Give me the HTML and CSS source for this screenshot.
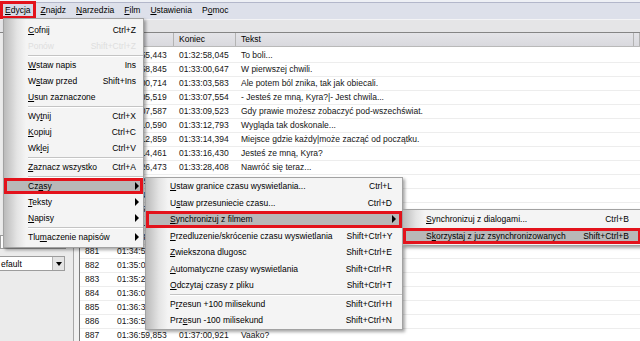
FILE: index.html
```
<!DOCTYPE html>
<html lang="pl">
<head>
    <meta charset="UTF-8">
    <title>Edycja - Czasy - Synchronizuj z filmem</title>
    <link rel="stylesheet" href="styles.css">
</head>
<body>
<div class="window">
    <!-- Menu bar -->
    <div class="menubar">
        <span class="menubar-item open"><u>E</u>dycja</span>
        <span class="menubar-item"><u>Z</u>najdz</span>
        <span class="menubar-item"><u>N</u>arzedzia</span>
        <span class="menubar-item"><u>F</u>ilm</span>
        <span class="menubar-item"><u>U</u>stawienia</span>
        <span class="menubar-item">P<u>o</u>moc</span>
    </div>
    <div class="toolbar"></div>

    <div class="main">
        <!-- Left panel -->
        <div class="side">
            <div class="side-fill"></div>
            <div class="edit"><span class="edit-btn"></span></div>
            <div class="combo"><span class="combo-text">efault</span><span class="combo-btn"></span></div>
        </div>
        <div class="splitter"></div>

        <!-- Subtitle list -->
        <div class="list">
            <div class="row head"><span>Nr</span><span>Start</span><span>Koniec</span><span>Tekst</span><span></span></div>
            <div class="list-body">
                <div class="row"><span>867</span><span>01:32:55,443</span><span>01:32:58,045</span><span>To boli...</span></div>
                <div class="row"><span>868</span><span>01:32:58,845</span><span>01:33:00,647</span><span>W pierwszej chwili.</span></div>
                <div class="row"><span>869</span><span>01:33:00,714</span><span>01:33:03,583</span><span>Ale potem ból znika, tak jak obiecali.</span></div>
                <div class="row"><span>870</span><span>01:33:05,519</span><span>01:33:07,554</span><span>- Jesteś ze mną, Kyra?|- Jest chwila...</span></div>
                <div class="row"><span>871</span><span>01:33:07,587</span><span>01:33:09,523</span><span>Gdy prawie możesz zobaczyć pod-wszechświat.</span></div>
                <div class="row"><span>872</span><span>01:33:10,590</span><span>01:33:12,793</span><span>Wygląda tak doskonale...</span></div>
                <div class="row"><span>873</span><span>01:33:12,859</span><span>01:33:14,394</span><span>Miejsce gdzie każdy|może zacząć od początku.</span></div>
                <div class="row"><span>874</span><span>01:33:14,461</span><span>01:33:16,430</span><span>Jesteś ze mną, Kyra?</span></div>
                <div class="row"><span>875</span><span>01:33:26,473</span><span>01:33:28,408</span><span>Nawróć się teraz...</span></div>
                <div class="row"><span>876</span><span>01:33:29,910</span><span>01:33:31,202</span><span>Nie mogę.</span></div>
                <div class="row"><span>877</span><span>01:33:41,318</span><span>01:33:43,150</span><span>Dlaczego?</span></div>
                <div class="row"><span>878</span><span>01:33:52,004</span><span>01:33:54,871</span><span>Bo on tam jest.</span></div>
                <div class="row"><span>879</span><span>01:34:10,226</span><span>01:34:12,620</span><span>Kto?</span></div>
                <div class="row"><span>880</span><span>01:34:31,497</span><span>01:34:33,308</span><span>Riddick.</span></div>
                <div class="row"><span>881</span><span>01:34:52,113</span><span>01:34:54,402</span><span>Czekaj.</span></div>
                <div class="row"><span>882</span><span>01:35:01,927</span><span>01:35:04,011</span><span>Nie teraz.</span></div>
                <div class="row"><span>883</span><span>01:35:24,610</span><span>01:35:26,795</span><span>Słyszysz?</span></div>
                <div class="row"><span>884</span><span>01:36:08,342</span><span>01:36:10,180</span><span>Tak.</span></div>
                <div class="row"><span>885</span><span>01:36:31,775</span><span>01:36:33,904</span><span>Idą.</span></div>
                <div class="row"><span>886</span><span>01:36:54,208</span><span>01:36:56,119</span><span>Uciekaj!</span></div>
                <div class="row"><span>887</span><span>01:36:59,853</span><span>01:37:00,921</span><span>Vaako?</span></div>
            </div>
        </div>
    </div>

    <!-- Edycja menu -->
    <div class="menu menu-edit">
        <div class="menu-item"><span><u>C</u>ofnij</span><span class="key">Ctrl+Z</span></div>
        <div class="menu-item disabled"><span>Ponów</span><span class="key">Shift+Ctrl+Z</span></div>
        <div class="menu-sep"></div>
        <div class="menu-item"><span><u>W</u>staw napis</span><span class="key">Ins</span></div>
        <div class="menu-item"><span>W<u>s</u>taw przed</span><span class="key">Shift+Ins</span></div>
        <div class="menu-item"><span><u>U</u>sun zaznaczone</span></div>
        <div class="menu-sep"></div>
        <div class="menu-item"><span>Wy<u>t</u>nij</span><span class="key">Ctrl+X</span></div>
        <div class="menu-item"><span><u>K</u>opiuj</span><span class="key">Ctrl+C</span></div>
        <div class="menu-item"><span>Wk<u>l</u>ej</span><span class="key">Ctrl+V</span></div>
        <div class="menu-sep"></div>
        <div class="menu-item"><span><u>Z</u>aznacz wszystko</span><span class="key">Ctrl+A</span></div>
        <div class="menu-sep"></div>
        <div class="menu-item sel"><span>Cz<u>a</u>sy</span><span class="arrow"></span></div>
        <div class="menu-item"><span><u>T</u>eksty</span><span class="arrow"></span></div>
        <div class="menu-item"><span><u>N</u>apisy</span><span class="arrow"></span></div>
        <div class="menu-sep"></div>
        <div class="menu-item"><span>Tlu<u>m</u>aczenie napisów</span><span class="arrow"></span></div>
    </div>

    <!-- Czasy submenu -->
    <div class="menu menu-times">
        <div class="menu-item"><span><u>U</u>staw granice czasu wyswietlania...</span><span class="key">Ctrl+L</span></div>
        <div class="menu-item"><span>U<u>s</u>taw przesuniecie czasu...</span><span class="key">Ctrl+D</span></div>
        <div class="menu-item sel"><span><u>S</u>ynchronizuj z filmem</span><span class="arrow"></span></div>
        <div class="menu-item"><span><u>P</u>rzedluzenie/skrócenie czasu wyswietlania</span><span class="key">Shift+Ctrl+Y</span></div>
        <div class="menu-item"><span><u>Z</u>wiekszona dlugosc</span><span class="key">Shift+Ctrl+E</span></div>
        <div class="menu-item"><span><u>A</u>utomatyczne czasy wyswietlania</span><span class="key">Shift+Ctrl+R</span></div>
        <div class="menu-item"><span><u>O</u>dczytaj czasy z pliku</span><span class="key">Shift+Ctrl+T</span></div>
        <div class="menu-sep"></div>
        <div class="menu-item"><span>P<u>r</u>zesun +100 milisekund</span><span class="key">Shift+Ctrl+H</span></div>
        <div class="menu-item"><span>Prz<u>e</u>sun -100 milisekund</span><span class="key">Shift+Ctrl+N</span></div>
    </div>

    <!-- Synchronizuj z filmem submenu -->
    <div class="menu menu-sync">
        <div class="menu-item"><span><u>S</u>ynchronizuj z dialogami...</span><span class="key">Ctrl+B</span></div>
        <div class="menu-item sel"><span>S<u>k</u>orzystaj z juz zsynchronizowanych</span><span class="key">Shift+Ctrl+B</span></div>
    </div>
</div>
</body>
</html>
```

FILE: styles.css
```
* {
    margin: 0;
    padding: 0;
    box-sizing: border-box;
}
body {
    width: 640px;
    height: 341px;
    overflow: hidden;
    font-family: "Liberation Sans", Arial, sans-serif;
    font-size: 8.5px;
    color: #000;
    background: #ececec;
}
u {
    text-decoration: underline;
    text-underline-offset: 1px;
}
.window {
    position: relative;
    width: 640px;
    height: 341px;
    display: flex;
    flex-direction: column;
}

/* Menu bar */
.menubar {
    height: 19px;
    padding-top: 1px;
    display: flex;
    background: linear-gradient(#eef0f5 0 2px, #b3b7ca 2px 3px, #dde0ea 3px);
}
.menubar-item {
    height: 18px;
    line-height: 18px;
    padding: 0 5px;
    white-space: nowrap;
}
.menubar-item.open {
    background: #d6dae6;
    box-shadow: inset 0 0 0 3px #e3121b;
}
.toolbar {
    height: 13px;
    background: #e5e5e7;
    border-top: 1px solid #f3f3f5;
}

/* Main area */
.main {
    flex: 1;
    display: flex;
    min-height: 0;
    border-top: 1px solid #858585;
}
.side {
    width: 74px;
    background: #ebebeb;
    border-right: 1px solid #a8a8a8;
    display: flex;
    flex-direction: column;
    overflow: hidden;
}
.side-fill {
    height: 202px;
}
.edit {
    height: 14px;
    width: 66px;
    background: #fff;
    border: 1px solid #9c9c9c;
    display: flex;
    justify-content: flex-end;
}
.edit-btn {
    width: 12px;
    background: #e2e2e2;
    border-left: 1px solid #b0b0b0;
}
.combo {
    margin-top: 7px;
    width: 65px;
    height: 15px;
    background: #fff;
    border: 1px solid #9c9c9c;
    border-left: none;
    display: flex;
    align-items: center;
}
.combo-text {
    flex: 1;
    padding-left: 1px;
}
.combo-btn {
    width: 12px;
    height: 13px;
    background: #e4e4e4;
    border-left: 1px solid #b4b4b4;
    position: relative;
}
.combo-btn::after {
    content: "";
    position: absolute;
    left: 3px;
    top: 5px;
    border-top: 4px solid #000;
    border-left: 3px solid transparent;
    border-right: 3px solid transparent;
}
.splitter {
    width: 6px;
    background: #f1f1f1;
    border-right: 1px solid #7c7c7c;
}

/* List view */
.list {
    flex: 1;
    background: #fff;
    overflow: hidden;
}
.row {
    display: grid;
    grid-template-columns: 32px 62px 62px 398px 1fr;
    height: 14px;
    line-height: 13px;
    border-bottom: 1px solid #ededed;
    color: #151515;
    white-space: nowrap;
}
.row span {
    padding-left: 5px;
    overflow: hidden;
}
.row.head {
    height: 14px;
    background: linear-gradient(#e4e4e8, #d9d9de);
    border-bottom: 1px solid #b9b9b9;
    color: #000;
}
.row.head span {
    border-right: 1px solid #b3b3b3;
}
.list-body {
    padding-top: 2px;
}

/* Popup menus */
.menu {
    position: absolute;
    background: linear-gradient(to right, #bababa, #e4e4e4 13px, #f4f4f4 22px);
    border: 1px solid #a2a2a2;
    box-shadow: 2px 2px 3px rgba(0, 0, 0, 0.35);
    white-space: nowrap;
}
.menu-item {
    display: flex;
    align-items: center;
    height: 16px;
    padding: 0 7px 0 24px;
}
.menu-item .key {
    margin-left: auto;
    padding-left: 14px;
}
.menu-item.disabled {
    color: #dedede;
}
.menu-item.sel {
    background: #b8b8b8;
    box-shadow: inset 0 0 0 3px #e3121b;
}
.arrow {
    margin-left: auto;
    margin-right: -3px;
    width: 0;
    height: 0;
    border-left: 4px solid #000;
    border-top: 4px solid transparent;
    border-bottom: 4px solid transparent;
}
.menu-sep {
    height: 2px;
    margin: 1px 0 0 24px;
    background: linear-gradient(#c4c4c4 0 1px, #fff 1px);
}

.menu-edit {
    left: 3px;
    top: 18px;
    width: 141px;
    padding: 3px 0 2px;
}
.menu-times {
    left: 145px;
    top: 177px;
    width: 258px;
}
.menu-times .menu-item {
    height: 16.5px;
    padding-right: 10px;
}
.menu-times .arrow {
    margin-right: -4px;
}
.menu-times .menu-sep {
    margin-top: 0;
}
.menu-sync {
    left: 402px;
    top: 209px;
    width: 240px;
    padding: 1px 0;
}
.menu-sync .menu-item {
    height: 16.5px;
    padding: 0 12px 0 23px;
}
```
